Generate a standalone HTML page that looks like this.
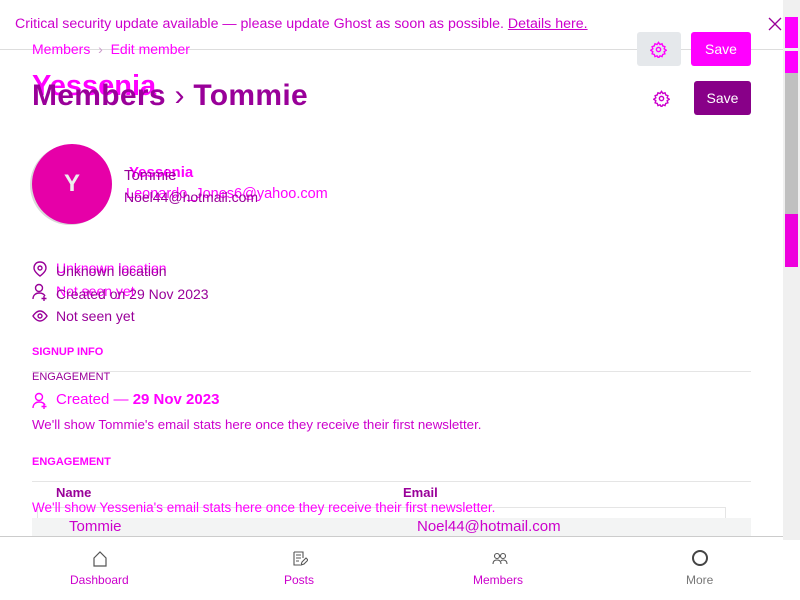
<!DOCTYPE html>
<html><head><meta charset="utf-8"><style>
*{margin:0;padding:0;box-sizing:border-box}
body{width:800px;height:600px;overflow:hidden;background:#fff;font-family:"Liberation Sans","DejaVu Sans",sans-serif;position:relative;color:#c0c}
.a{position:absolute;white-space:nowrap}
.m{color:#f0f}
.p{color:#909}
svg{position:absolute}
</style></head><body>
<div class="a" style="left:15px;top:16px;font-size:14.2px;color:#c0c">Critical security update available — please update Ghost as soon as possible. <u>Details here.</u></div>
<svg style="left:768px;top:17px" width="14" height="14" viewBox="0 0 14 14"><path d="M1 1L13 13M13 1L1 13" stroke="#909" stroke-width="1.3"/></svg>
<div class="a" style="left:0;top:49px;width:783px;height:1px;background:#ddd"></div>
<div class="a m" style="left:32px;top:41px;font-size:14px">Members <span style="color:#c9c">&nbsp;›&nbsp;</span> Edit member</div>
<div class="a" style="left:637px;top:32px;width:44px;height:34px;background:#e5e8eb;border-radius:3px"></div>
<svg style="left:650px;top:41px" width="17" height="17" viewBox="0 0 24 24"><g fill="none" stroke="#f0f" stroke-width="2"><circle cx="12" cy="12" r="3"/><path d="M12 2l2 3 3-1 1 3 3 1-1 3 3 2-3 2 1 3-3 1-1 3-3-1-2 3-2-3-3 1-1-3-3-1 1-3-3-2 3-2-1-3 3-1 1-3 3 1z"/></g></svg>
<div class="a" style="left:691px;top:32px;width:60px;height:34px;background:#f0f;border-radius:3px;color:#fff;font-size:14px;text-align:center;line-height:34px">Save</div>
<div class="a m" style="left:32px;top:70px;font-size:29px;font-weight:bold">Yessenia</div>
<div class="a" style="left:32px;top:79px;font-size:30px;font-weight:bold;color:#909;letter-spacing:0.3px">Members <span style="font-weight:normal">›</span> Tommie</div>
<svg style="left:653px;top:90px" width="17" height="17" viewBox="0 0 24 24"><g fill="none" stroke="#c0c" stroke-width="2"><circle cx="12" cy="12" r="3"/><path d="M12 2l2 3 3-1 1 3 3 1-1 3 3 2-3 2 1 3-3 1-1 3-3-1-2 3-2-3-3 1-1-3-3-1 1-3-3-2 3-2-1-3 3-1 1-3 3 1z"/></g></svg>
<div class="a" style="left:694px;top:81px;width:57px;height:34px;background:#808;border-radius:3px;color:#fff;font-size:14px;text-align:center;line-height:34px">Save</div>
<div class="a" style="left:30px;top:145px;width:80px;height:80px;border-radius:50%;background:#d8d8d8"></div>
<div class="a" style="left:32px;top:144px;width:80px;height:80px;border-radius:50%;background:#e600a8;color:#eee;font-size:24px;font-weight:bold;text-align:center;line-height:80px">Y</div>
<div class="a m" style="left:129px;top:164px;font-size:15px;font-weight:bold">Yessenia</div>
<div class="a p" style="left:124px;top:167px;font-size:15px">Tommie</div>
<div class="a m" style="left:126px;top:186px;font-size:14.5px">Leonardo_Jones6@yahoo.com</div>
<div class="a p" style="left:124px;top:189px;font-size:14px">Noel44@hotmail.com</div>
<svg style="left:32px;top:261px" width="16" height="64" viewBox="0 0 16 64"><g fill="none" stroke="#909" stroke-width="1.4"><path d="M8 1C4 1 2 4 2 7c0 4 6 8 6 8s6-4 6-8c0-3-2-6-6-6z"/><circle cx="8" cy="7" r="2"/><circle cx="7" cy="27" r="3.5"/><path d="M1 38c0-4 3-6 6-6s5 1 6 3M12 35v5M9.5 37.5h5"/><path d="M1 55s3-5 7-5 7 5 7 5-3 5-7 5-7-5-7-5z"/><circle cx="8" cy="55" r="2"/></g></svg>
<div class="a m" style="left:56px;top:260px;font-size:14px">Unknown location</div>
<div class="a p" style="left:56px;top:263px;font-size:14px">Unknown location</div>
<div class="a m" style="left:56px;top:283px;font-size:14px">Not seen yet</div>
<div class="a p" style="left:56px;top:286px;font-size:14px">Created on 29 Nov 2023</div>
<div class="a p" style="left:56px;top:308px;font-size:14px">Not seen yet</div>
<div class="a m" style="left:32px;top:346px;font-size:11px;font-weight:bold">SIGNUP INFO</div>
<div class="a" style="left:32px;top:371px;width:719px;height:1px;background:#e5e5e5"></div>
<div class="a p" style="left:32px;top:371px;font-size:11px">ENGAGEMENT</div>
<svg style="left:32px;top:392px" width="16" height="18" viewBox="0 0 16 18"><g fill="none" stroke="#f0f" stroke-width="1.4"><circle cx="7" cy="5" r="3.5"/><path d="M1 16c0-4 3-6 6-6s5 1 6 3M12 12v5M9.5 14.5h5"/></g></svg>
<div class="a m" style="left:56px;top:391px;font-size:15px">Created — <b>29 Nov 2023</b></div>
<div class="a" style="left:32px;top:417px;font-size:13.3px;color:#c0c">We'll show Tommie's email stats here once they receive their first newsletter.</div>
<div class="a m" style="left:32px;top:456px;font-size:11px;font-weight:bold">ENGAGEMENT</div>
<div class="a" style="left:32px;top:481px;width:719px;height:1px;background:#e5e5e5"></div>
<div class="a p" style="left:56px;top:485px;font-size:13px;font-weight:bold">Name</div>
<div class="a p" style="left:403px;top:485px;font-size:13px;font-weight:bold">Email</div>
<div class="a" style="left:37px;top:507px;width:689px;height:14px;border:1px solid #e5e5e5;border-bottom:none"></div>
<div class="a m" style="left:32px;top:500px;font-size:13.5px">We'll show Yessenia's email stats here once they receive their first newsletter.</div>
<div class="a" style="left:32px;top:518px;width:719px;height:20px;background:#f3f4f4"></div>
<div class="a" style="left:69px;top:518px;font-size:15px;color:#c0c">Tommie</div>
<div class="a" style="left:417px;top:518px;font-size:15px;color:#c0c">Noel44@hotmail.com</div>
<div class="a" style="left:0;top:536px;width:800px;height:64px;background:#fff;border-top:1px solid #ccc"></div>
<svg style="left:92px;top:551px" width="16" height="16" viewBox="0 0 16 16"><path d="M2 7L8 1l6 6v8H2z" fill="none" stroke="#555" stroke-width="1.2"/></svg>
<svg style="left:292px;top:551px" width="16" height="16" viewBox="0 0 16 16"><g fill="none" stroke="#555" stroke-width="1.1"><path d="M2 1h9v6M2 1v13h6"/><path d="M4 4h5M4 7h5M4 10h3M9 14l1-3 4-4 2 2-4 4z"/></g></svg>
<svg style="left:492px;top:551px" width="16" height="16" viewBox="0 0 16 16"><g fill="none" stroke="#555" stroke-width="1.1"><circle cx="5" cy="5" r="2.5"/><circle cx="11" cy="5" r="2.5"/><path d="M1 13c0-3 2-4 4-4s4 1 4 4M9 10c1-1 2-1 2-1 2 0 4 1 4 4"/></g></svg>
<div class="a" style="left:692px;top:550px;width:16px;height:16px;border:2px solid #444;border-radius:50%"></div>
<div class="a" style="left:70px;top:573px;font-size:12px;color:#c0c">Dashboard</div>
<div class="a" style="left:284px;top:573px;font-size:12px;color:#c0c">Posts</div>
<div class="a" style="left:473px;top:573px;font-size:12px;color:#c0c">Members</div>
<div class="a" style="left:686px;top:573px;font-size:12px;color:#777">More</div>
<div class="a" style="left:783px;top:0;width:17px;height:540px;background:#f0f0f0"></div>
<div class="a" style="left:785px;top:17px;width:13px;height:31px;background:#f0f"></div>
<div class="a" style="left:785px;top:51px;width:13px;height:22px;background:#f0f"></div>
<div class="a" style="left:785px;top:73px;width:13px;height:141px;background:#c0c0c0"></div>
<div class="a" style="left:785px;top:214px;width:13px;height:53px;background:#e0d"></div>
</body></html>
